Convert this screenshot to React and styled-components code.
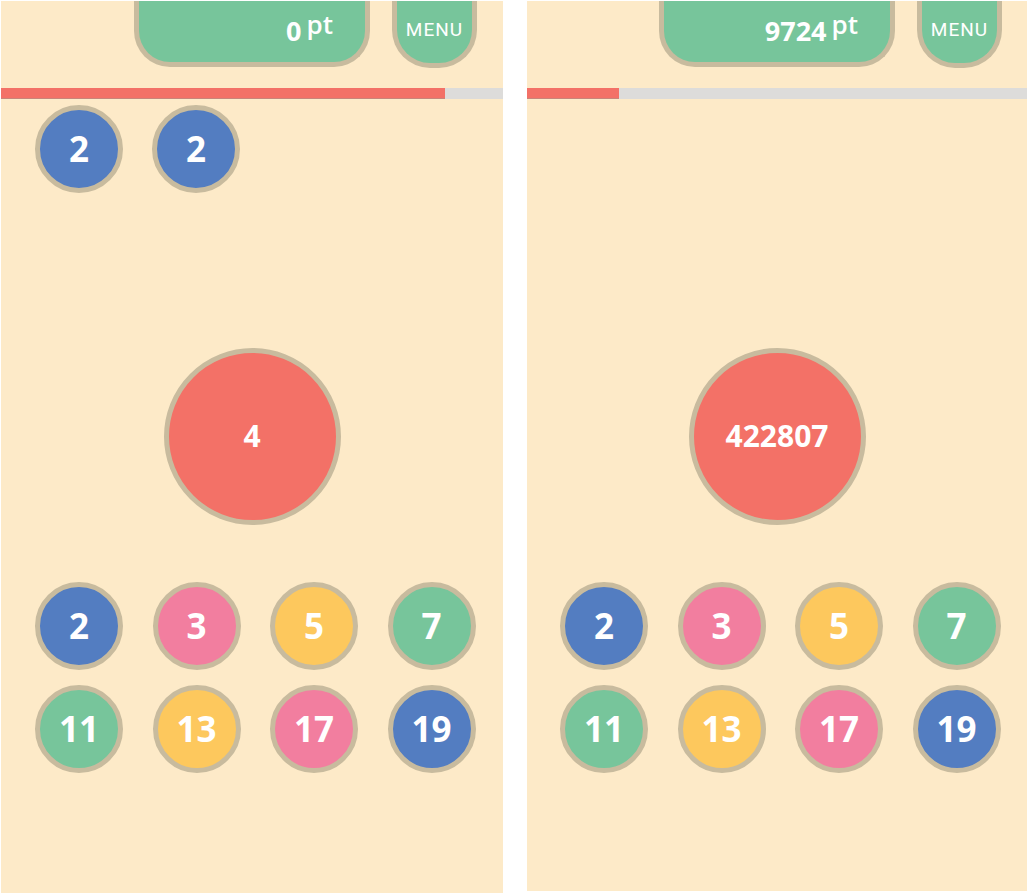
import styled, { createGlobalStyle } from 'styled-components';

const GlobalStyle = createGlobalStyle`
  html, body {
    margin: 0;
    padding: 0;
    background: #ffffff;
  }
  * {
    box-sizing: border-box;
  }
`;

const colors = {
  blue: '#537dc1',
  pink: '#f27e9f',
  yellow: '#fdc85d',
  green: '#77c59b',
  red: '#f37167',
};

const Page = styled.div`
  display: grid;
  grid-template-columns: 502px 500px;
  column-gap: 24px;
  padding: 1px 0 0 1px;
  width: 1027px;
  height: 893px;
  overflow: hidden;
`;

const Screen = styled.div`
  display: flex;
  flex-direction: column;
  height: ${(p) => p.$height}px;
  background: #fdeac8;
  overflow: hidden;
`;

const Header = styled.div`
  display: flex;
  justify-content: flex-end;
  align-items: flex-start;
  gap: 22px;
  padding-right: ${(p) => p.$right}px;
  height: 66px;
`;

const ScoreBox = styled.div`
  width: 236px;
  height: 66px;
  background: ${colors.green};
  border: 5px solid #c8bb9e;
  border-top: none;
  border-radius: 0 0 36px 36px;
  padding: 10px 32px 0 0;
  text-align: right;
  color: #ffffff;
  white-space: nowrap;
`;

const ScoreValue = styled.span`
  font-family: 'Open Sans', sans-serif;
  font-weight: 700;
  font-size: 27px;
  line-height: 1;
`;

const ScoreUnit = styled.span`
  font-family: 'Open Sans', sans-serif;
  font-weight: 600;
  font-size: 26px;
  line-height: 1;
  margin-left: 5px;
  vertical-align: 7px;
`;

const MenuButton = styled.div`
  width: 85px;
  height: 67px;
  background: ${colors.green};
  border: 5px solid #c8bb9e;
  border-top: none;
  border-radius: 0 0 38px 38px;
  padding-top: 19px;
  color: #ffffff;
  font-family: Roboto, sans-serif;
  font-size: 19px;
  letter-spacing: 1px;
  line-height: 1;
  text-align: center;
  cursor: pointer;
`;

const Progress = styled.div`
  margin-top: 21px;
  height: 11px;
  background: #dddcda;
  display: flex;
`;

const ProgressFill = styled.div`
  height: 100%;
  background: ${colors.red};
  border-bottom: 1px solid #c9857a;
`;

const TopRow = styled.div`
  display: flex;
  gap: 29px;
  height: 88px;
  margin-top: 6px;
  padding-left: ${(p) => p.$left}px;
`;

const Ball = styled.div`
  width: ${(p) => p.$size}px;
  height: ${(p) => p.$size}px;
  flex: none;
  border-radius: 50%;
  border: 5px solid #c8bb9e;
  background: ${(p) => p.$color};
  color: #ffffff;
  display: flex;
  align-items: center;
  justify-content: center;
  font-family: 'Open Sans', sans-serif;
  font-weight: 700;
  font-size: ${(p) => p.$font}px;
  line-height: 1;
  padding-bottom: 2px;
`;

const Target = styled(Ball)`
  align-self: center;
  margin-top: 155px;
`;

const Grid = styled.div`
  display: grid;
  grid-template-columns: repeat(4, 88px);
  column-gap: 29.5px;
  row-gap: 15px;
  margin-top: 57px;
  padding-left: ${(p) => p.$left}px;
`;

const primes = [
  { n: 2, c: colors.blue },
  { n: 3, c: colors.pink },
  { n: 5, c: colors.yellow },
  { n: 7, c: colors.green },
  { n: 11, c: colors.green },
  { n: 13, c: colors.yellow },
  { n: 17, c: colors.pink },
  { n: 19, c: colors.blue },
];

const GameScreen = ({ score, target, progress, stack, height, left, right }) => (
  <Screen $height={height}>
    <Header $right={right}>
      <ScoreBox>
        <ScoreValue>{score}</ScoreValue>
        <ScoreUnit>pt</ScoreUnit>
      </ScoreBox>
      <MenuButton>MENU</MenuButton>
    </Header>
    <Progress>
      <ProgressFill style={{ width: `${progress}%` }} />
    </Progress>
    <TopRow $left={left}>
      {stack.map((n, i) => (
        <Ball key={i} $size={88} $font={35} $color={colors.blue}>
          {n}
        </Ball>
      ))}
    </TopRow>
    <Target $size={177} $font={30} $color={colors.red}>
      {target}
    </Target>
    <Grid $left={left}>
      {primes.map((p) => (
        <Ball key={p.n} $size={88} $font={35} $color={p.c}>
          {p.n}
        </Ball>
      ))}
    </Grid>
  </Screen>
);

const App = () => (
  <>
    <GlobalStyle />
    <Page>
      <GameScreen score={0} target={4} progress={88.4} stack={[2, 2]} height={892} left={34} right={26} />
      <GameScreen score={9724} target={422807} progress={18.4} stack={[]} height={890} left={33} right={25} />
    </Page>
  </>
);

export default App;
